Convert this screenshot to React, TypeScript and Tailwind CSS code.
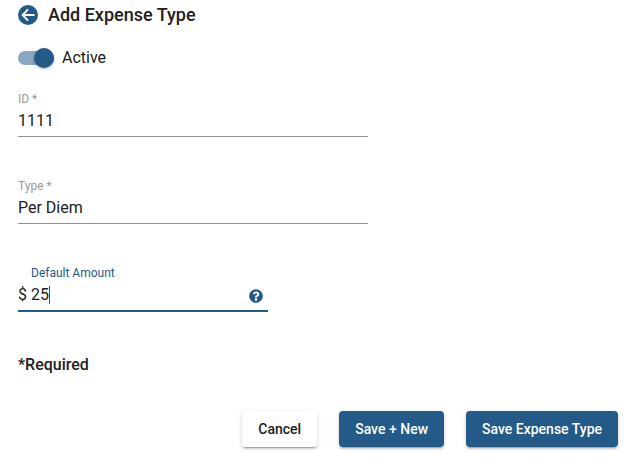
import { useState } from "react";
import { FaQuestionCircle } from "react-icons/fa";

const TEXT_FIELDS = [
  { id: "expense-id", label: "ID *", value: "1111" },
  { id: "expense-type", label: "Type *", value: "Per Diem" },
];

const BUTTON =
  "h-9 rounded px-4 text-sm font-medium shadow-[0_3px_1px_-2px_rgba(0,0,0,0.2),0_2px_2px_0_rgba(0,0,0,0.14),0_1px_5px_0_rgba(0,0,0,0.12)]";

function TextField({ id, label, value }: { id: string; label: string; value: string }) {
  return (
    <div className="flex w-full max-w-[350px] flex-col border-b border-[#949494]">
      <label htmlFor={id} className="text-xs leading-4 text-[#999999]">
        {label}
      </label>
      <input
        id={id}
        type="text"
        defaultValue={value}
        className="mb-[3px] h-[26px] w-full bg-transparent text-base text-[#212121] outline-none"
      />
    </div>
  );
}

export default function AddExpenseType() {
  const [active, setActive] = useState(true);
  const [amount, setAmount] = useState("25");

  return (
    <form
      className="bg-white pb-4 pl-[18px] pr-[13px] pt-1 font-['Roboto',sans-serif] text-[#212121]"
      onSubmit={(e) => e.preventDefault()}
    >
      <header className="flex h-[22px] items-center gap-[10px]">
        <button type="button" aria-label="Back" className="size-5 shrink-0">
          <svg viewBox="0 0 20 20" className="size-5" fill="none">
            <circle cx="10" cy="10" r="10" fill="#245a88" />
            <path d="M16.5 10H5M10 4.4L4.6 10L10 15.6" stroke="#fff" strokeWidth="2" />
          </svg>
        </button>
        <h1 className="text-lg font-medium leading-[22px]">Add Expense Type</h1>
      </header>

      {/* Active switch */}
      <label className="mt-5 flex h-6 w-fit items-center gap-2 text-base">
        <input
          type="checkbox"
          role="switch"
          checked={active}
          onChange={(e) => setActive(e.target.checked)}
          className="peer sr-only"
        />
        <span className="flex h-[14px] w-9 items-center rounded-full bg-black/40 peer-checked:bg-[#8ba7c1] peer-checked:[&>span]:translate-x-4 peer-checked:[&>span]:bg-[#245a88]">
          <span className="size-5 shrink-0 rounded-full bg-white shadow-[0_1px_3px_rgba(0,0,0,0.3)]" />
        </span>
        Active
      </label>

      <div className="mt-[21px] flex flex-col gap-[41px]">
        {TEXT_FIELDS.map((f) => (
          <TextField key={f.id} {...f} />
        ))}

        {/* Default amount, focused */}
        <div className="flex w-full max-w-[250px] flex-col border-b-2 border-[#245a88]">
          <label htmlFor="amount" className="pl-[13px] text-xs leading-4 text-[#245a88]">
            Default Amount
          </label>
          <div className="mb-[2px] mt-px flex h-[26px] items-center text-base">
            <span className="mr-1">$</span>
            <input
              id="amount"
              type="text"
              value={amount}
              onChange={(e) => setAmount(e.target.value)}
              className="field-sizing-content bg-transparent caret-transparent outline-none"
            />
            <span className="h-[18px] w-px bg-[#245a88]" />
            <button type="button" aria-label="Help" className="ml-auto mr-[5px] mt-px">
              <FaQuestionCircle size={14} color="#245a88" />
            </button>
          </div>
        </div>
      </div>

      <p className="mt-[41px] text-base font-medium leading-6">*Required</p>

      <div className="mt-[34px] flex justify-end gap-[22px]">
        <button type="button" className={`${BUTTON} bg-white`}>
          Cancel
        </button>
        <button type="button" className={`${BUTTON} bg-[#245a88] text-white`}>
          Save + New
        </button>
        <button type="submit" className={`${BUTTON} bg-[#245a88] text-white`}>
          Save Expense Type
        </button>
      </div>
    </form>
  );
}
